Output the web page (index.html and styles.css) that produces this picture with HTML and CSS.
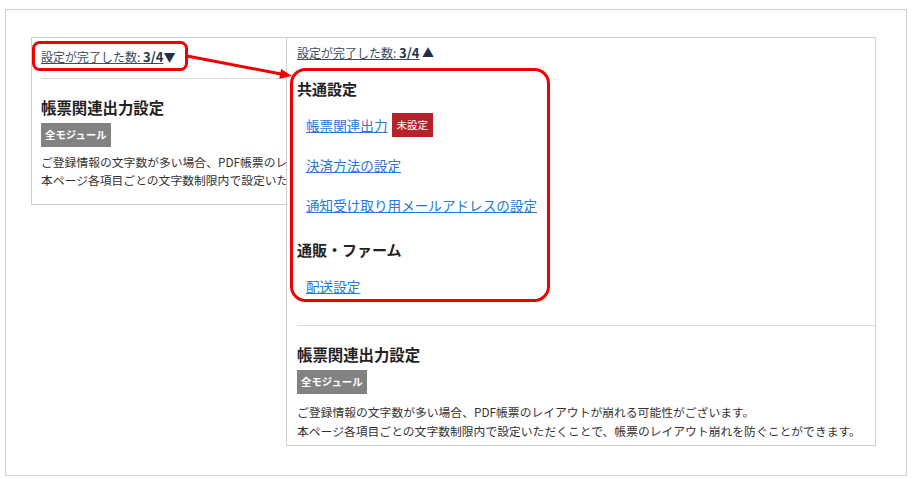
FILE: index.html
```html
<!DOCTYPE html>
<html lang="ja">
<head>
  <meta charset="UTF-8" />
  <title>設定状況</title>
  <link rel="stylesheet" href="styles.css">
</head>
<body>

  <div class="frame">
    <!-- 閉じた状態 -->
    <div class="card card-closed">
      <div class="progress"><a href="#" class="progress-link">設定が完了した数: <b>3/4</b></a><span class="caret">▼</span></div>
      <hr class="sep">
      <div class="notice">
        <h3>帳票関連出力設定</h3>
        <span class="tag">全モジュール</span>
        <p>ご登録情報の文字数が多い場合、PDF帳票のレイアウトが崩れる可能性がございます。<br>本ページ各項目ごとの文字数制限内で設定いただくことで、帳票のレイアウト崩れを防ぐことができます。</p>
      </div>
    </div>

    <!-- 開いた状態 -->
    <div class="card card-open">
      <div class="progress"><a href="#" class="progress-link">設定が完了した数: <b>3/4</b></a> <span class="caret">▲</span></div>
      <div class="menu">
        <h4>共通設定</h4>
        <div class="menu-item"><a href="#">帳票関連出力</a><span class="unset">未設定</span></div>
        <div class="menu-item"><a href="#">決済方法の設定</a></div>
        <div class="menu-item"><a href="#">通知受け取り用メールアドレスの設定</a></div>
        <h4 class="group">通販・ファーム</h4>
        <div class="menu-item"><a href="#">配送設定</a></div>
      </div>
      <hr class="sep sep-wide">
      <div class="notice">
        <h3>帳票関連出力設定</h3>
        <span class="tag">全モジュール</span>
        <p>ご登録情報の文字数が多い場合、PDF帳票のレイアウトが崩れる可能性がございます。<br>本ページ各項目ごとの文字数制限内で設定いただくことで、帳票のレイアウト崩れを防ぐことができます。</p>
      </div>
    </div>
  </div>

  <svg class="marks" width="913" height="481" viewBox="0 0 913 481">
    <rect x="33.5" y="42.5" width="153" height="27" rx="6" fill="none" stroke="#f00000" stroke-width="3"/>
    <rect x="291.5" y="69.5" width="257" height="231" rx="14" fill="none" stroke="#f00000" stroke-width="3"/>
    <line x1="187" y1="56" x2="281" y2="74" stroke="#f00000" stroke-width="3"/>
    <polygon points="292,76 281.1,68.9 279.3,78.7" fill="#f00000"/>
  </svg>

</body>
</html>
```

FILE: styles.css
```css
body {
  margin: 0;
  padding: 9px 0 0 5px;
  font-family: "Noto Sans CJK JP", "Noto Sans", sans-serif;
  color: #333;
  background: #fff;
}
.frame {
  position: relative;
  box-sizing: border-box;
  width: 902px;
  height: 467px;
  padding: 27px 0 0 25px;
  border: 1px solid #d0d0d0;
}
.card {
  box-sizing: border-box;
  border: 1px solid #cfcfcf;
  background: #fff;
}
/* 右のカードの下に隠れる部分は切り取る */
.card-closed {
  width: 258px;
  overflow: hidden;
  padding: 10px 0 15px 9px;
}
.card-open {
  position: absolute;
  left: 280px;
  top: 27px;
  width: 590px;
  height: 409px;
  padding: 6px 0 0 10px;
}
.progress {
  font-size: 12px;
  line-height: 18px;
  color: #2d3e50;
}
.progress-link {
  color: #3b4a5c;
  text-decoration: underline;
}
.progress-link b {
  font-size: 13px;
  color: #243447;
}
.caret {
  font-size: 12px;
  color: #1f2f48;
}
.sep {
  border: none;
  border-top: 1px solid #dcdcdc;
  margin: 12px 0 0;
}
.sep-wide {
  margin-top: 27px;
}
.notice h3 {
  margin: 17px 0 0;
  font-size: 15.4px;
  line-height: 22px;
  font-weight: bold;
  color: #222;
}
.tag {
  display: inline-block;
  margin-top: 5px;
  padding: 0 4px;
  height: 24px;
  line-height: 24px;
  font-size: 10.4px;
  font-weight: bold;
  color: #fff;
  background: #828282;
}
.notice p {
  margin: 6px 0 0;
  font-size: 11.8px;
  line-height: 18px;
  white-space: nowrap;
}
.card-open .notice p {
  margin-top: 8px;
  line-height: 19px;
}
.menu h4 {
  margin: 16px 0 0;
  font-size: 15px;
  line-height: 22px;
  font-weight: bold;
  color: #222;
}
.menu h4.group {
  margin-top: 22px;
}
.menu-item {
  display: flex;
  align-items: center;
  height: 24px;
  margin-top: 16px;
  padding-left: 9px;
}
.menu h4 + .menu-item {
  margin-top: 13px;
}
.menu-item a {
  font-size: 13.6px;
  color: #2a78d4;
  text-decoration: underline;
}
.unset {
  margin-left: 4px;
  padding: 0 5px;
  height: 24px;
  line-height: 24px;
  font-size: 10.5px;
  color: #fff;
  background: #b5222a;
}
.marks {
  position: absolute;
  left: 0;
  top: 0;
  pointer-events: none;
}
```
